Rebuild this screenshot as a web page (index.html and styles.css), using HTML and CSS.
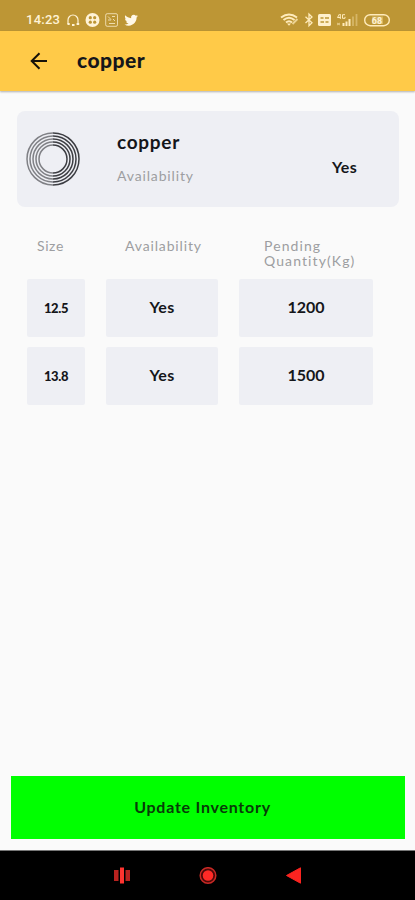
FILE: index.html
```html
<!DOCTYPE html>
<html lang="en">
<head>
<meta charset="utf-8">
<title>copper</title>
<link rel="stylesheet" href="styles.css">
</head>
<body>
<div class="status">
  <span class="clock">14:23</span>
  <svg class="status-left" width="74" height="16" viewBox="0 0 74 16" fill="none" stroke="#fff3d6">
    <path d="M2 12V8a5 5 0 0 1 10 0v4" stroke-width="1.2"/>
    <path d="M1.500 12h2.200M10.600 12h2.600M6 13h2.500" stroke-width="2"/>
    <circle cx="26.500" cy="8" r="7" fill="#fff3d6" stroke="none"/>
    <g fill="#bd9635" stroke="none"><circle cx="24.300" cy="5.700" r="1.600"/><circle cx="28.700" cy="5.700" r="1.600"/><circle cx="24.300" cy="10.200" r="1.600"/><circle cx="28.700" cy="10.200" r="1.600"/></g>
    <rect x="39.700" y="1.700" width="11.800" height="12.600" rx="1.500" stroke-width=".9" opacity=".8"/>
    <path d="M42 4.500l3 3m1-3h3M42 8h3m2-1 2 2M43 11.500h6" stroke-width="1" opacity=".75"/>
    <path transform="translate(58.500 1.500) scale(.56)" fill="#fff8e8" stroke="none" d="M23.950 4.570a10 10 0 0 1-2.820.770 4.960 4.960 0 0 0 2.160-2.720 9.900 9.900 0 0 1-3.120 1.180 4.920 4.920 0 0 0-8.380 4.480C7.690 8.100 4.070 6.130 1.640 3.160a4.920 4.920 0 0 0 1.520 6.570 4.900 4.900 0 0 1-2.230-.61v.06a4.920 4.920 0 0 0 3.950 4.830 5 5 0 0 1-2.210.08 4.940 4.940 0 0 0 4.600 3.420A9.870 9.870 0 0 1 0 19.540a13.990 13.990 0 0 0 7.550 2.210c9.050 0 14-7.500 14-13.980 0-.21 0-.42-.02-.63a9.940 9.940 0 0 0 2.420-2.570z"/>
  </svg>
  <svg class="status-right" width="111" height="16" viewBox="0 0 111 16" fill="none" stroke="#ffebbb">
    <path d="M1 5.500q8-6 16 0M3.500 8q5.500-4.500 11 0M6 10.500q3-2.600 6 0" stroke-width="2"/>
    <path d="M7 11.500l2 2.300 2-2.300z" fill="#ffebbb" stroke="none"/>
    <path d="M12.500 12l5-5" stroke-width="2" opacity=".7"/>
    <path d="M25.500 4.800l6.500 6-3 3V2l3 3-6.500 6" stroke-width="1.300"/>
    <rect x="38" y="2" width="13" height="12" rx="1.500" fill="#fff0cc" stroke="none"/>
    <path d="M40.500 6h3m1.500 0h4M40.500 10h3.500m1.500 0h3" stroke="#bd9635" stroke-width="1.500"/>
    <path d="M59.500 2l-2 3.500h3M60.300 2v5M65 2.700h-2.500v3.600H65V4.800" stroke-width="1"/>
    <path d="M57 11l3 2m0-2-3 2" stroke-width="1" opacity=".6"/>
    <path d="M63.500 14v-3M66.500 14V9.500M69.500 14V7" stroke-width="2"/>
    <path d="M73 14V4.500M76.500 14V2" stroke-width="1.800" opacity=".38"/>
    <rect x="84.700" y="2.700" width="24.600" height="11" rx="5.500" stroke-width="1.400"/>
    <rect x="92" y="4.500" width="11" height="7.500" fill="#ffebbb" stroke="none" opacity=".35"/>
    <text x="97" y="11.600" text-anchor="middle" class="battery">68</text>
  </svg>
</div>
<header class="appbar">
  <svg class="back" width="18" height="18" viewBox="0 0 18 18" fill="none" stroke="#171208" stroke-width="2"><path d="M17 9H2M9.500 1.200 1.700 9l7.800 7.800"/></svg>
  <h1>copper</h1>
</header>
<main>
  <section class="card">
    <svg class="coil" width="54" height="56" viewBox="0 0 54 56" fill="none" stroke-width="1.500">
      <g stroke="#808186"><path d="M27 2a26 26 0 0 0 0 52M27 5a23 23 0 0 0 0 46M27 8a20 20 0 0 0 0 40M27 11a17 17 0 0 0 0 34M27 14a14 14 0 0 0 0 28"/></g>
      <g stroke="#3d3e43"><path d="M27 2a26 26 0 0 1 0 52M27 5a23 23 0 0 1 0 46M27 8a20 20 0 0 1 0 40M27 11a17 17 0 0 1 0 34M27 14a14 14 0 0 1 0 28"/></g>
    </svg>
    <div class="info"><h2>copper</h2><p>Availability</p></div>
    <strong class="yes">Yes</strong>
  </section>
  <section class="grid">
    <span class="head head-size">Size</span>
    <span class="head head-avail">Availability</span>
    <span class="head head-qty"><span>Pending</span><span>Quantity(Kg)</span></span>
    <div class="cell small"><span>12.5</span></div><div class="cell yes">Yes</div><div class="cell num">1200</div>
    <div class="cell small"><span>13.8</span></div><div class="cell yes">Yes</div><div class="cell num">1500</div>
  </section>
  <button class="update">Update Inventory</button>
</main>
<nav class="nav">
  <svg width="18" height="18" viewBox="0 0 18 18"><path fill="#b9221f" d="M1 3h4.500v11H1zM12.500 3H17v11h-4.500z"/><path fill="#ff3430" d="M7 .5h4v16H7z"/></svg>
  <svg width="18" height="18" viewBox="0 0 18 18"><circle cx="9" cy="8.500" r="7.800" fill="#4d0908" stroke="#c82925" stroke-width="1.500"/><circle cx="9" cy="8.500" r="5.300" fill="#ff2a26"/></svg>
  <svg width="18" height="18" viewBox="0 0 18 18"><path fill="#fa2420" stroke="#fa2420" stroke-linejoin="round" d="M1.500 8.500 15.500.800v15.400z"/></svg>
</nav>
</body>
</html>
```
FILE: styles.css
```css
* { box-sizing: border-box; }
body {
  margin: 0;
  width: 415px;
  height: 900px;
  display: flex;
  flex-direction: column;
  overflow: hidden;
  background: #fafafa;
  color: #15161a;
  font-family: Lato, "Liberation Sans", sans-serif;
}
h1, h2, p { margin: 0; }
.status {
  height: 31px;
  flex: none;
  display: flex;
  align-items: center;
  padding: 8px 24px 0 26px;
  background: #bd9635;
}
.clock {
  width: 40px;
  font: 500 13px/16px Roboto, sans-serif;
  letter-spacing: .25px;
  color: #fff3d6;
}
.status-right { margin-left: auto; }
.battery { font: 700 9px Roboto, sans-serif; fill: #fff3d6; stroke: none; }
.appbar {
  height: 60px;
  flex: none;
  display: flex;
  align-items: center;
  padding-left: 30px;
  background: #ffca48;
  box-shadow: 0 1px 2px rgba(0, 0, 0, .3);
}
.appbar h1 {
  margin-left: 29px;
  padding-bottom: 3px;
  font-size: 21px;
  line-height: 24px;
  font-weight: 900;
  letter-spacing: .5px;
}
main {
  flex: 1;
  display: flex;
  flex-direction: column;
  padding: 20px 10px 11px 11px;
}
.card {
  height: 96px;
  margin: 0 6px;
  display: flex;
  align-items: center;
  padding: 0 42px 0 9px;
  border-radius: 8px;
  background: #eeeff4;
}
.info { margin: -3px 0 0 37px; }
.info h2 { font-size: 19px; line-height: 24px; font-weight: 700; letter-spacing: .7px; }
.info p { margin-top: 12px; font-size: 14px; line-height: 20px; letter-spacing: .85px; color: #9d9ea1; }
.card .yes { margin: 14px 0 0 auto; }
.yes { font-size: 16px; font-weight: 700; letter-spacing: .3px; }
.grid {
  display: grid;
  grid-template-columns: 58px 112px 134px;
  grid-template-rows: 48px 58px 58px;
  column-gap: 21px;
  row-gap: 10px;
  margin: 14px 0 0 16px;
}
.head {
  padding-top: 17px;
  font-size: 14px;
  line-height: 15px;
  letter-spacing: .85px;
  color: #9d9ea1;
}
.head-size { padding-left: 10px; letter-spacing: .6px; }
.head-avail { padding-left: 19px; }
.head-qty { padding-left: 25px; letter-spacing: 1.1px; }
.head-qty span { display: block; }
.cell {
  display: flex;
  align-items: center;
  justify-content: center;
  padding-bottom: 3px;
  border-radius: 2px;
  background: #eeeff4;
}
.small { padding-bottom: 1px; font-size: 13px; font-weight: 900; letter-spacing: -.4px; }
.num { font-size: 16px; font-weight: 700; }
.update {
  height: 63px;
  margin-top: auto;
  padding: 0 11px 2px 0;
  border: 0;
  background: #00ff00;
  color: #083b08;
  font: 700 16px Lato, sans-serif;
  letter-spacing: .75px;
}
.nav {
  height: 50px;
  flex: none;
  display: flex;
  justify-content: center;
  align-items: center;
  gap: 68px;
  border-top: 1px solid #777;
  background: #000;
}
```
